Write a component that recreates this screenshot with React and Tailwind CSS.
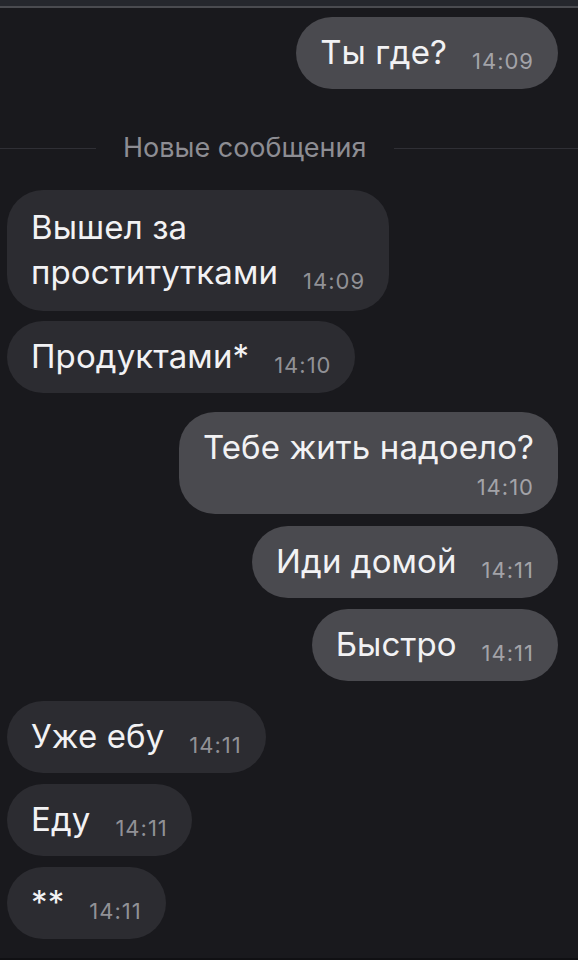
import React from "react";

const messages = [
  { id: 1, out: true, lines: ["Ты где?"], time: "14:09", gap: "mt-[9px]" },
  { id: "div" },
  { id: 2, out: false, lines: ["Вышел за", "проститутками"], time: "14:09", gap: "mt-[26px]" },
  { id: 3, out: false, lines: ["Продуктами*"], time: "14:10", gap: "mt-[10px]" },
  { id: 4, out: true, lines: ["Тебе жить надоело?"], time: "14:10", gap: "mt-[19px]", stacked: true },
  { id: 5, out: true, lines: ["Иди домой"], time: "14:11", gap: "mt-[12px]" },
  { id: 6, out: true, lines: ["Быстро"], time: "14:11", gap: "mt-[11px]" },
  { id: 7, out: false, lines: ["Уже ебу"], time: "14:11", gap: "mt-[20px]" },
  { id: 8, out: false, lines: ["Еду"], time: "14:11", gap: "mt-[11px]" },
  { id: 9, out: false, lines: ["**"], time: "14:11", gap: "mt-[11px]" },
];

const Bubble = ({ msg }) => {
  const bg = msg.out ? "bg-[#4a4a4f]" : "bg-[#2c2c31]";
  const timeColor = msg.out ? "text-[#a3a3a8]" : "text-[#919196]";
  const last = msg.lines.length - 1;
  const pad = msg.lines.length > 1 ? "pt-[15px] pb-[16px]" : "pt-[13px] pb-[14px]";

  return (
    <div className={`flex ${msg.out ? "justify-end pr-[20px]" : "justify-start pl-[7px]"} ${msg.gap}`}>
      <div className={`${bg} rounded-[36px] px-6 ${pad} text-[#f2f2f4] text-[33px] leading-[45px] tracking-[0.1px] whitespace-nowrap`}>
        {msg.lines.map((line, i) => (
          <div key={i}>
            {line}
            {!msg.stacked && i === last && (
              <span className={`inline-block ml-[25px] text-[22px] leading-none tracking-[1px] relative top-[5px] ${timeColor}`}>
                {msg.time}
              </span>
            )}
          </div>
        ))}
        {msg.stacked && (
          <div className={`text-right text-[22px] leading-[26px] tracking-[1px] mt-1 ${timeColor}`}>{msg.time}</div>
        )}
      </div>
    </div>
  );
};

const NewDivider = () => (
  <div className="flex items-center mt-[43px]">
    <div className="w-[96px] h-px bg-[#2f2f35]" />
    <div className="px-[27px] text-[27px] leading-[32px] text-[#8d8d93]">Новые сообщения</div>
    <div className="flex-1 h-px bg-[#2f2f35]" />
  </div>
);

export default function App() {
  return (
    <div
      className="w-[578px] h-[960px] bg-[#19191d] overflow-hidden flex flex-col"
      style={{ fontFamily: "Inter, 'Noto Sans', sans-serif" }}
    >
      <div className="h-[8px] bg-[#25272d] border-b-2 border-[#4a4b50] shrink-0" />
      <div className="flex-1">
        {messages.map((m) =>
          m.id === "div" ? <NewDivider key="div" /> : <Bubble key={m.id} msg={m} />
        )}
      </div>
      <div className="h-[2px] bg-[#101013] shrink-0" />
    </div>
  );
}
